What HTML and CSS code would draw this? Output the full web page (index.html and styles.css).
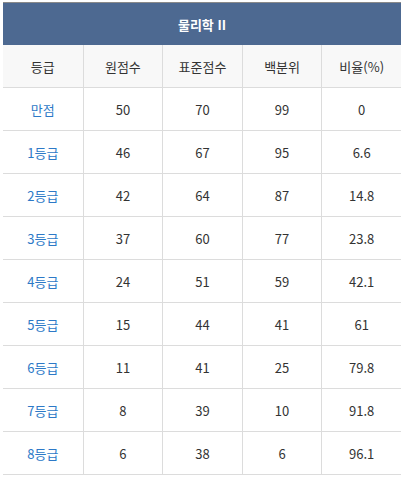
FILE: index.html
```html
<!DOCTYPE html>
<html lang="ko">
<head>
<meta charset="utf-8">
<link rel="stylesheet" href="styles.css">
</head>
<body>
<table class="grade">
  <thead>
    <tr><th class="title" colspan="5">물리학 II</th></tr>
    <tr class="head">
      <th>등급</th><th>원점수</th><th>표준점수</th><th>백분위</th><th>비율(%)</th>
    </tr>
  </thead>
  <tbody>
    <tr><td class="lv">만점</td><td>50</td><td>70</td><td>99</td><td>0</td></tr>
    <tr><td class="lv">1등급</td><td>46</td><td>67</td><td>95</td><td>6.6</td></tr>
    <tr><td class="lv">2등급</td><td>42</td><td>64</td><td>87</td><td>14.8</td></tr>
    <tr><td class="lv">3등급</td><td>37</td><td>60</td><td>77</td><td>23.8</td></tr>
    <tr><td class="lv">4등급</td><td>24</td><td>51</td><td>59</td><td>42.1</td></tr>
    <tr><td class="lv">5등급</td><td>15</td><td>44</td><td>41</td><td>61</td></tr>
    <tr><td class="lv">6등급</td><td>11</td><td>41</td><td>25</td><td>79.8</td></tr>
    <tr><td class="lv">7등급</td><td>8</td><td>39</td><td>10</td><td>91.8</td></tr>
    <tr><td class="lv">8등급</td><td>6</td><td>38</td><td>6</td><td>96.1</td></tr>
  </tbody>
</table>
</body>
</html>
```
FILE: styles.css
```css
html, body {
  margin: 0;
  background: #fff;
}
body {
  padding: 2px 0 0 3px;
  font-family: "Noto Sans CJK KR", "Noto Sans", sans-serif;
  font-size: 13px;
  color: #333;
}
.grade {
  width: 398px;
  border-collapse: separate;
  border-spacing: 0;
  table-layout: fixed;
  border-top: 1px solid #8a8a8a;
}
.grade th, .grade td {
  padding: 1px 0 0;
  text-align: center;
  vertical-align: middle;
  font-weight: normal;
  line-height: 18px;
  box-sizing: border-box;
}
.grade .title {
  height: 42px;
  background: #4d6991;
  color: #fff;
  font-weight: bold;
  border: none;
}
.grade .head th {
  height: 43px;
  background: #f8f8f8;
  border-bottom: 1px solid #dcdcdc;
  border-left: 1px solid #dcdcdc;
  color: #333;
}
.grade td {
  height: 43px;
  border-bottom: 1px solid #dcdcdc;
  border-left: 1px solid #dcdcdc;
}
.grade .head th:first-child,
.grade td:first-child {
  border-left: none;
}
.grade .lv {
  color: #2d79c7;
}
```
